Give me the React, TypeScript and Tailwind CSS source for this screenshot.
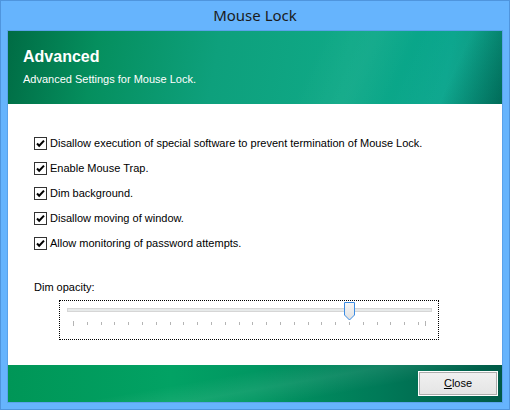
import type { ReactNode } from 'react';

const OPTIONS = [
  'Disallow execution of special software to prevent termination of Mouse Lock.',
  'Enable Mouse Trap.',
  'Dim background.',
  'Disallow moving of window.',
  'Allow monitoring of password attempts.',
];

// trackbar: range 0..255, tick every 10, value 200
const MAX = 255;
const VALUE = 200;
const TICKS = [...Array.from({ length: 26 }, (_, i) => i * 10), MAX];
const TRACK_X0 = 13; // first tick, relative to slider box
const TRACK_SPAN = 352;

const ui = { fontFamily: '"Liberation Sans", Arial, sans-serif' };

function CheckBox() {
  return (
    <svg width="13" height="13" viewBox="0 0 13 13" className="shrink-0">
      <rect x="0.5" y="0.5" width="12" height="12" fill="#fff" stroke="#333" />
      <path d="M3 6.5 L5.2 8.8 L10 3.6" fill="none" stroke="#000" strokeWidth="2" />
    </svg>
  );
}

function Row({ children }: { children: ReactNode }) {
  return (
    <label className="h-[25px] flex items-center gap-[3px] text-[11px] text-black">
      <CheckBox />
      <span>{children}</span>
    </label>
  );
}

function Slider() {
  const thumbX = TRACK_X0 + (VALUE / MAX) * TRACK_SPAN;
  return (
    <div className="relative ml-[25px] w-[380px] h-[40px] border border-dotted border-black">
      <div className="absolute left-[7px] top-[7px] w-[365px] h-[4px] bg-[#e7eaea] border border-[#d6d6d6]" />
      {TICKS.map((t, i) => {
        const end = i === 0 || i === TICKS.length - 1;
        return (
          <div
            key={t}
            className={end ? 'absolute top-[20px] w-px h-[5px] bg-[#b4b4b4]' : 'absolute top-[21px] w-px h-[3px] bg-[#b4b4b4]'}
            style={{ left: TRACK_X0 + (t / MAX) * TRACK_SPAN }}
          />
        );
      })}
      <svg
        width="11"
        height="19"
        viewBox="0 0 11 19"
        className="absolute top-[1px]"
        style={{ left: thumbX - 5 }}
      >
        <defs>
          <linearGradient id="thumb" x1="0" y1="0" x2="0" y2="1">
            <stop offset="0" stopColor="#f6f6f6" />
            <stop offset="1" stopColor="#e1e1e1" />
          </linearGradient>
        </defs>
        <path d="M0.5 0.5 H10.5 V13 L5.5 18 L0.5 13 Z" fill="url(#thumb)" stroke="#3c8ce3" />
      </svg>
    </div>
  );
}

export default function App() {
  return (
    <div
      className="w-[510px] h-[410px] bg-[#66b4fd] border border-[#4f95dd] flex flex-col"
      style={ui}
    >
      {/* Title bar */}
      <div className="h-[29px] flex items-center justify-center text-[15px] text-[#1b1b1b] pb-[1px]" style={{ fontFamily: '"Noto Sans", "Open Sans", sans-serif' }}>
        Mouse Lock
      </div>

      <div className="flex-1 px-[6px] pb-[6px] flex">
        <div className="flex-1 border border-[#5aa2ea] flex flex-col bg-white">
          {/* Header */}
          <div className="h-[73px] shrink-0 pl-[15px] pt-[16px] text-white bg-[linear-gradient(115deg,transparent_60%,rgba(255,255,255,0.04)_70%,transparent_78%,rgba(255,255,255,0.04)_88%,rgba(0,0,0,0.22)_100%),linear-gradient(100deg,#006c44_0%,#058f5e_18%,#0ea07c_42%,#0fa987_68%,#06a48b_88%,#008a72_100%)]">
            <div className="text-[16px] font-bold leading-[20px]">Advanced</div>
            <div className="text-[11px] mt-[5px] leading-[14px]">Advanced Settings for Mouse Lock.</div>
          </div>

          {/* Body */}
          <div className="flex-1 pl-[26px] pt-[27px]">
            {OPTIONS.map((o) => (
              <Row key={o}>{o}</Row>
            ))}
            <div className="text-[11px] leading-[14px] mt-[24px] text-black">Dim opacity:</div>
            <div className="mt-[6px]">
              <Slider />
            </div>
          </div>

          {/* Footer */}
          <div className="h-[37px] shrink-0 flex items-center justify-end pr-[4px] bg-[linear-gradient(170deg,transparent_40%,rgba(255,255,255,0.08)_55%,transparent_70%),linear-gradient(90deg,#009657_0%,#02a264_33%,#019762_50%,#007a58_75%,#005a47_100%)]">
            <button className="w-[80px] h-[25px] border border-white">
              <div className="w-full h-full border border-[#adadad] bg-[linear-gradient(#f0f0f0,#e5e5e5)] flex items-center justify-center text-[11px] text-black">
                <span>
                  <span className="underline">C</span>lose
                </span>
              </div>
            </button>
          </div>
        </div>
      </div>
    </div>
  );
}
